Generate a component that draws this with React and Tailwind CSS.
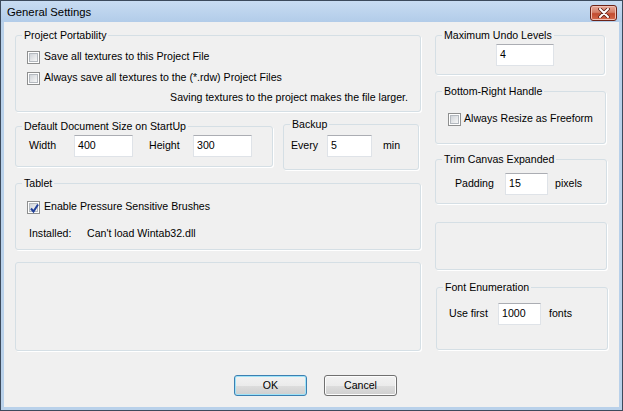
import React from "react";

function Check({ checked }) {
  return (
    <span className="relative flex w-[13px] h-[13px] shrink-0 border border-[#8e8f8f] bg-white p-[1px]">
      <span className="flex-1 border border-[#b4b9bf] bg-gradient-to-br from-[#d0d4d9] to-[#f7f7f7]" />
      {checked && (
        <svg className="absolute left-[1px] top-[1px]" width="11" height="11" viewBox="0 0 11 11">
          <path d="M2 5.5 L4.5 8.5 L9 1.5" fill="none" stroke="#21409a" strokeWidth="2" />
        </svg>
      )}
    </span>
  );
}

function Group({ label, className, children }) {
  return (
    <fieldset className={"border border-[#d5dfe5] rounded-[3px] shadow-[1px_1px_0_#ffffff] min-w-0 " + className}>
      {label && <legend className="ml-[6px] px-[2px] leading-[13px]">{label}</legend>}
      {children}
    </fieldset>
  );
}

function Input({ value, className }) {
  return (
    <div className={"h-[22px] bg-white border border-[#dfe3e8] border-t-[#abadb3] pl-[3px] pt-[3px] leading-[13px] " + className}>
      {value}
    </div>
  );
}

function Button({ children, def }) {
  return (
    <div
      className={
        "w-[73px] h-[21px] rounded-[3px] border flex items-center justify-center bg-[linear-gradient(#f2f2f2_0%,#ebebeb_50%,#dddddd_51%,#cfcfcf_100%)] " +
        (def ? "border-[#3c7fb1] shadow-[inset_0_0_0_1px_#9fe3f8]" : "border-[#707070] shadow-[inset_0_0_0_1px_#fcfcfc]")
      }
    >
      {children}
    </div>
  );
}

export default function App() {
  return (
    <div className="w-[623px] h-[411px] bg-[#b9d1ea] border border-[#3c4a5c] flex flex-col text-[10.6px] text-black font-['Liberation_Sans',Arial,sans-serif]">
      <div className="h-[21px] shrink-0 flex items-center justify-between pl-[6px] pr-[5px] bg-gradient-to-b from-[#c8dcf2] to-[#b2cce9]">
        <span className="text-[11.3px] leading-[14px]">General Settings</span>
        <div className="w-[27px] h-[16px] mt-[2px] rounded-[3px] border border-[#6b2318] bg-[linear-gradient(#e9a99a_0%,#d47f68_45%,#c24b30_55%,#d46a4d_100%)] flex items-center justify-center shadow-[inset_0_0_0_1px_#f1c0b4]">
          <svg width="12" height="10" viewBox="0 0 12 10">
            <path d="M2 1 L10 9 M10 1 L2 9" stroke="#5a1e14" strokeWidth="3.6" strokeLinecap="round" />
            <path d="M2 1 L10 9 M10 1 L2 9" stroke="#ffffff" strokeWidth="2" strokeLinecap="round" />
          </svg>
        </div>
      </div>
      <div className="flex-1 mx-[3px] mb-[3px] bg-[#f0f0f0] flex flex-col pl-[11px] pt-[7px]">
        <div className="flex">
          {/* left column */}
          <div className="w-[406px] flex flex-col">
            <Group label="Project Portability" className="h-[83px]">
              <div className="pl-[11px] pr-[12px] flex flex-col">
                <div className="mt-[8px] h-[14px] flex items-center gap-[4px]">
                  <Check />
                  <span>Save all textures to this Project File</span>
                </div>
                <div className="mt-[7px] h-[14px] flex items-center gap-[4px]">
                  <Check />
                  <span>Always save all textures to the (*.rdw) Project Files</span>
                </div>
                <div className="mt-[6px] leading-[13px] text-right">
                  Saving textures to the project makes the file larger.
                </div>
              </div>
            </Group>
            <div className="mt-[6px] flex items-start">
              <Group label="Default Document Size on StartUp" className="mt-[2px] w-[258px] h-[47px]">
                <div className="mt-[2px] pl-[13px] flex items-center">
                  <span className="w-[45px]">Width</span>
                  <Input value="400" className="w-[59px]" />
                  <span className="ml-[16px] w-[44px]">Height</span>
                  <Input value="300" className="w-[59px]" />
                </div>
              </Group>
              <Group label="Backup" className="ml-[10px] w-[136px] h-[52px]">
                <div className="mt-[4px] pl-[7px] flex items-center">
                  <span className="w-[36px]">Every</span>
                  <Input value="5" className="w-[45px]" />
                  <span className="ml-[11px]">min</span>
                </div>
              </Group>
            </div>
            <Group label="Tablet" className="mt-[7px] h-[73px]">
              <div className="flex flex-col">
                <div className="mt-[10px] pl-[11px] h-[14px] flex items-center gap-[4px]">
                  <Check checked />
                  <span>Enable Pressure Sensitive Brushes</span>
                </div>
                <div className="mt-[13px] pl-[13px] leading-[13px] flex">
                  <span className="w-[58px]">Installed:</span>
                  <span>Can't load Wintab32.dll</span>
                </div>
              </div>
            </Group>
            <Group className="mt-[12px] h-[89px]" />
          </div>
          {/* right column */}
          <div className="ml-[14px] w-[173px] flex flex-col">
            <Group label="Maximum Undo Levels" className="w-[170px] h-[46px]">
              <div className="mt-[2px] pl-[60px] flex">
                <Input value="4" className="w-[58px]" />
              </div>
            </Group>
            <Group label="Bottom-Right Handle" className="mt-[10px] w-[171px] h-[59px]">
              <div className="mt-[14px] pl-[12px] h-[14px] flex items-center gap-[3px]">
                <Check />
                <span>Always Resize as Freeform</span>
              </div>
            </Group>
            <Group label="Trim Canvas Expanded" className="mt-[9px] w-[172px] h-[51px]">
              <div className="mt-[7px] pl-[19px] flex items-center">
                <span className="w-[50px]">Padding</span>
                <Input value="15" className="w-[43px]" />
                <span className="ml-[7px]">pixels</span>
              </div>
            </Group>
            <Group className="mt-[18px] w-[172px] h-[48px]" />
            <Group label="Font Enumeration" className="mt-[11px] ml-[1px] w-[172px] h-[69px]">
              <div className="mt-[9px] pl-[12px] flex items-center">
                <span className="w-[49px]">Use first</span>
                <Input value="1000" className="w-[43px]" />
                <span className="ml-[8px]">fonts</span>
              </div>
            </Group>
          </div>
        </div>
        <div className="mt-[24px] ml-[219px] flex gap-[17px]">
          <Button def>OK</Button>
          <Button>Cancel</Button>
        </div>
      </div>
    </div>
  );
}
